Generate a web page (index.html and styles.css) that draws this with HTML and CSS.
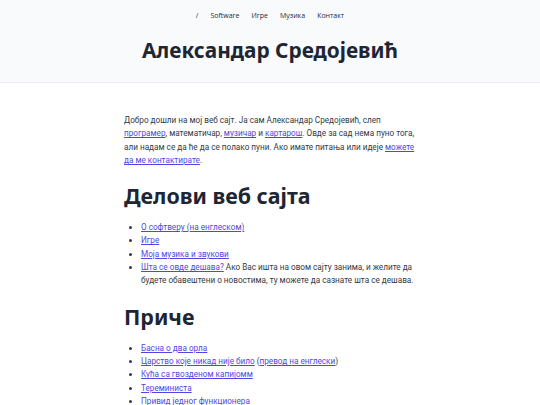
FILE: index.html
```html
<!DOCTYPE html>
<html>
<head>
<meta charset="utf-8">
<title>Александар Средојевић</title>
<link rel="stylesheet" href="styles.css">
</head>
<body>
<header class="site-header">
  <nav class="nav">
    <a href="#">/</a>
    <a href="#">Software</a>
    <a href="#">Игре</a>
    <a href="#">Музика</a>
    <a href="#">Контакт</a>
  </nav>
  <h1 class="title">Александар Средојевић</h1>
</header>
<main class="content">
  <p>Добро дошли на мој веб сајт. Ја сам Александар Средојевић, слеп <a href="#">програмер</a>, математичар, <a href="#">музичар</a> и <a href="#">картарош</a>. Овде за сад нема пуно тога, али надам се да ће да се полако пуни. Ако имате питања или идеје <a href="#">можете да ме контактирате</a>.</p>
  <h2>Делови веб сајта</h2>
  <ul>
    <li><a href="#">О софтверу (на енглеском)</a></li>
    <li><a href="#">Игре</a></li>
    <li><a href="#">Моја музика и звукови</a></li>
    <li><a href="#">Шта се овде дешава?</a> Ако Вас ишта на овом сајту занима, и желите да будете обавештени о новостима, ту можете да сазнате шта се дешава.</li>
  </ul>
  <h2>Приче</h2>
  <ul>
    <li><a href="#">Басна о два орла</a></li>
    <li><a href="#">Царство које никад није било</a> (<a href="#">превод на енглески</a>)</li>
    <li><a href="#">Кућа са гвозденом капијомм</a></li>
    <li><a href="#">Тереминиста</a></li>
    <li><a href="#">Привид једног функционера</a></li>
  </ul>
</main>
</body>
</html>
```
FILE: styles.css
```css
html, body {
  margin: 0;
  padding: 0;
}
body {
  font-family: "Noto Sans", "Open Sans", sans-serif;
  color: #333a45;
  background: #ffffff;
}
.site-header {
  background: #f8fafc;
  border-bottom: 1px solid #eceef1;
  padding: 10px 0 16px;
  text-align: center;
}
.nav {
  display: flex;
  justify-content: center;
  gap: 12px;
  font-family: "Open Sans", "Noto Sans", sans-serif;
  font-size: 7px;
  line-height: 12px;
}
.nav a {
  color: #1e293b;
  text-decoration: none;
}
.title {
  margin: 12px 0 0;
  font-size: 20.8px;
  line-height: 32px;
  font-weight: 700;
  color: #1e2533;
}
.content {
  width: 292px;
  margin: 0 auto;
  padding-top: 31px;
  font-family: Roboto, "Noto Sans", sans-serif;
  font-size: 8.2px;
  line-height: 13.3px;
}
.content p {
  margin: 0;
}
.content a {
  color: #4f46e5;
  text-decoration: underline;
}
.content h2 {
  font-family: "Noto Sans", "Open Sans", sans-serif;
  font-size: 21.4px;
  line-height: 26px;
  font-weight: 700;
  color: #1e2533;
  margin: 16px 0 12px;
}
.content ul {
  margin: 0;
  padding-left: 17px;
}
```
